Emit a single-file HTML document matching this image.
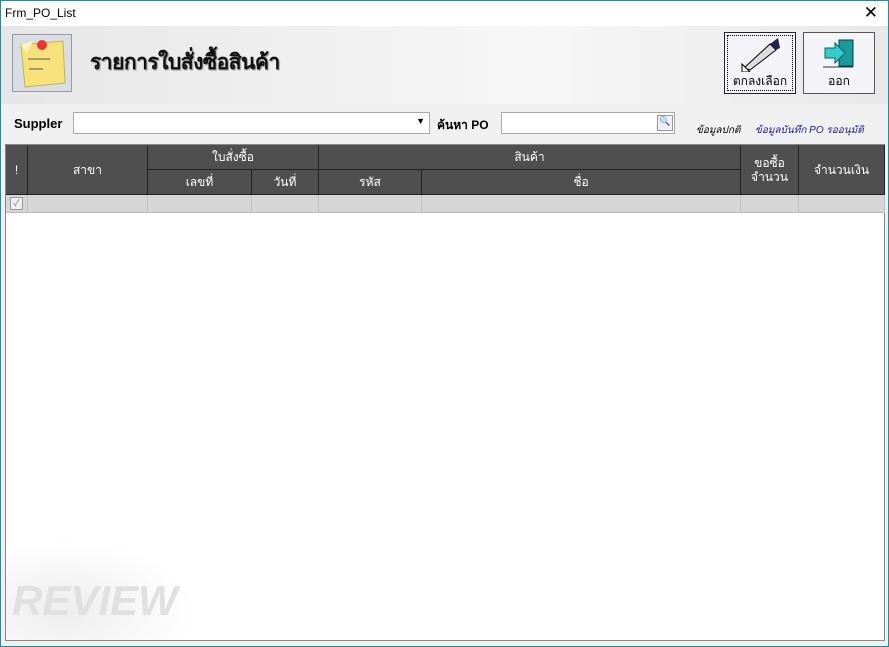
<!DOCTYPE html>
<html><head><meta charset="utf-8"><style>
*{margin:0;padding:0;box-sizing:border-box}
body{width:889px;height:647px;position:relative;overflow:hidden;background:#fff;font-family:"Liberation Sans","Noto Sans CJK SC",sans-serif;font-size:12px}
.win{position:absolute;left:0;top:0;width:889px;height:647px;border:1px solid #1a8fa0;background:#f0f0f0}
.title{position:absolute;left:0;top:0;width:887px;height:26px;background:#fff;font-size:12px;padding:5px 0 0 4px}
.x{position:absolute;right:10px;top:2px;font-size:17px;font-weight:300}
.hdr{position:absolute;left:0;top:25px;width:887px;height:78px;background:linear-gradient(90deg,#e6e6e6,#f7f7f7 60%,#e8e8e8)}
.icon{position:absolute;left:11px;top:33px;width:60px;height:58px;background:#d8dde6;border:1px solid #999}
.h1{position:absolute;left:89px;top:45px;font-family:"Liberation Serif","Noto Serif CJK SC",serif;font-size:21px;font-weight:bold;color:#111;text-shadow:1px 1px 1px #888;letter-spacing:-0.5px}
.btn{position:absolute;top:31px;width:72px;height:62px;background:#f4f4f8;border:1px solid #555;font-size:12px;text-align:center}
.btn svg{position:absolute;left:11px;top:3px}
.btn span{position:absolute;bottom:2px;left:0;right:0}
.lbl{position:absolute;font-weight:bold;font-size:13px}
.inp{position:absolute;background:#fff;border:1px solid #aaa}
.lnk{position:absolute;top:122px;font-style:italic;font-size:10px}
.grid{position:absolute;left:4px;top:143px;width:880px;height:497px;background:#fff;border:1px solid #888}
.c{position:absolute;background:#4f4f4f;color:#fff;border-right:1px solid #222;border-bottom:1px solid #222;display:flex;align-items:center;justify-content:center;font-size:12px;text-align:center;line-height:14px}
.r{position:absolute;top:50px;height:18px;background:#d6d6d6;border-right:1px solid #c0c0c0;border-bottom:1px solid #bbb}
</style></head><body><div class="win">
<div class="title">Frm_PO_List<span class="x">✕</span></div>
<div class="hdr"></div>
<div class="icon"><svg width="58" height="56"><path d="M8 10 L50 6 L52 48 L12 52 Z" fill="#f7e27a" stroke="#c9b24a"/><path d="M8 10 L20 6 L14 18 Z" fill="#fff6c0"/><circle cx="29" cy="10" r="5" fill="#e33"/><path d="M15 24h22M16 34h14" stroke="#555" stroke-width="1"/></svg></div>
<div class="h1">รายการใบสั่งซื้อสินค้า</div>
<div class="btn" style="left:723px;outline:1px dotted #000;outline-offset:-4px;border-color:#223"><svg width="50" height="36"><path d="M8 32 L34 8 L40 14 L14 34 Z" fill="#ddd" stroke="#000"/><path d="M34 8 L42 2 L44 12 L40 14Z" fill="#225"/><path d="M6 28 L14 36 L6 36Z" fill="#fff" stroke="#000"/></svg><span>ตกลงเลือก</span></div>
<div class="btn" style="left:802px"><svg width="50" height="36"><rect x="24" y="4" width="14" height="26" fill="#1a9a9a" stroke="#044"/><path d="M10 12h10v-5l10 10-10 10v-5H10z" fill="#3cc" stroke="#066"/><path d="M8 31h30" stroke="#333"/></svg><span>ออก</span></div>
<div class="lbl" style="left:13px;top:115px">Suppler</div>
<div class="inp" style="left:72px;top:111px;width:357px;height:22px"><span style="position:absolute;right:4px;top:3px;font-size:9px">▼</span></div>
<div class="lbl" style="left:436px;top:115px;font-size:12px">ค้นหา PO</div>
<div class="inp" style="left:500px;top:111px;width:174px;height:22px"><span style="position:absolute;right:1px;top:2px;width:16px;height:16px;border:1px solid #999;background:#eef;font-size:9px;text-align:center">🔍</span></div>
<div class="lnk" style="left:695px">ข้อมูลปกติ</div>
<div class="lnk" style="left:754px;color:#1a1aa0">ข้อมูลบันทึก PO รออนุมัติ</div>
<div class="grid">
<div class="c" style="left:0;top:0;width:22px;height:50px">!</div>
<div class="c" style="left:22px;top:0;width:120px;height:50px">สาขา</div>
<div class="c" style="left:142px;top:0;width:171px;height:25px">ใบสั่งซื้อ</div>
<div class="c" style="left:142px;top:25px;width:104px;height:25px">เลขที่</div>
<div class="c" style="left:246px;top:25px;width:67px;height:25px">วันที่</div>
<div class="c" style="left:313px;top:0;width:422px;height:25px">สินค้า</div>
<div class="c" style="left:313px;top:25px;width:103px;height:25px">รหัส</div>
<div class="c" style="left:416px;top:25px;width:319px;height:25px">ชื่อ</div>
<div class="c" style="left:735px;top:0;width:58px;height:50px">ขอซื้อ<br>จำนวน</div>
<div class="c" style="left:793px;top:0;width:86px;height:50px">จำนวนเงิน</div>
<div class="r" style="left:0;width:22px"><div style="margin:2px 4px;width:13px;height:13px;border:1px solid #999;background:#eee;font-size:9px;color:#888;line-height:11px;text-align:center">✓</div></div>
<div class="r" style="left:22px;width:120px"></div><div class="r" style="left:142px;width:104px"></div><div class="r" style="left:246px;width:67px"></div><div class="r" style="left:313px;width:103px"></div><div class="r" style="left:416px;width:319px"></div><div class="r" style="left:735px;width:58px"></div><div class="r" style="left:793px;width:86px"></div>
<div style="position:absolute;left:0;top:395px;width:190px;height:100px;background:radial-gradient(ellipse at 30% 70%,#ededed,#fff 70%)"></div>
<div style="position:absolute;left:6px;top:432px;color:#e0e0e0;font-size:42px;font-weight:bold;font-style:italic">REVIEW</div>
</div>
</div></body></html>
